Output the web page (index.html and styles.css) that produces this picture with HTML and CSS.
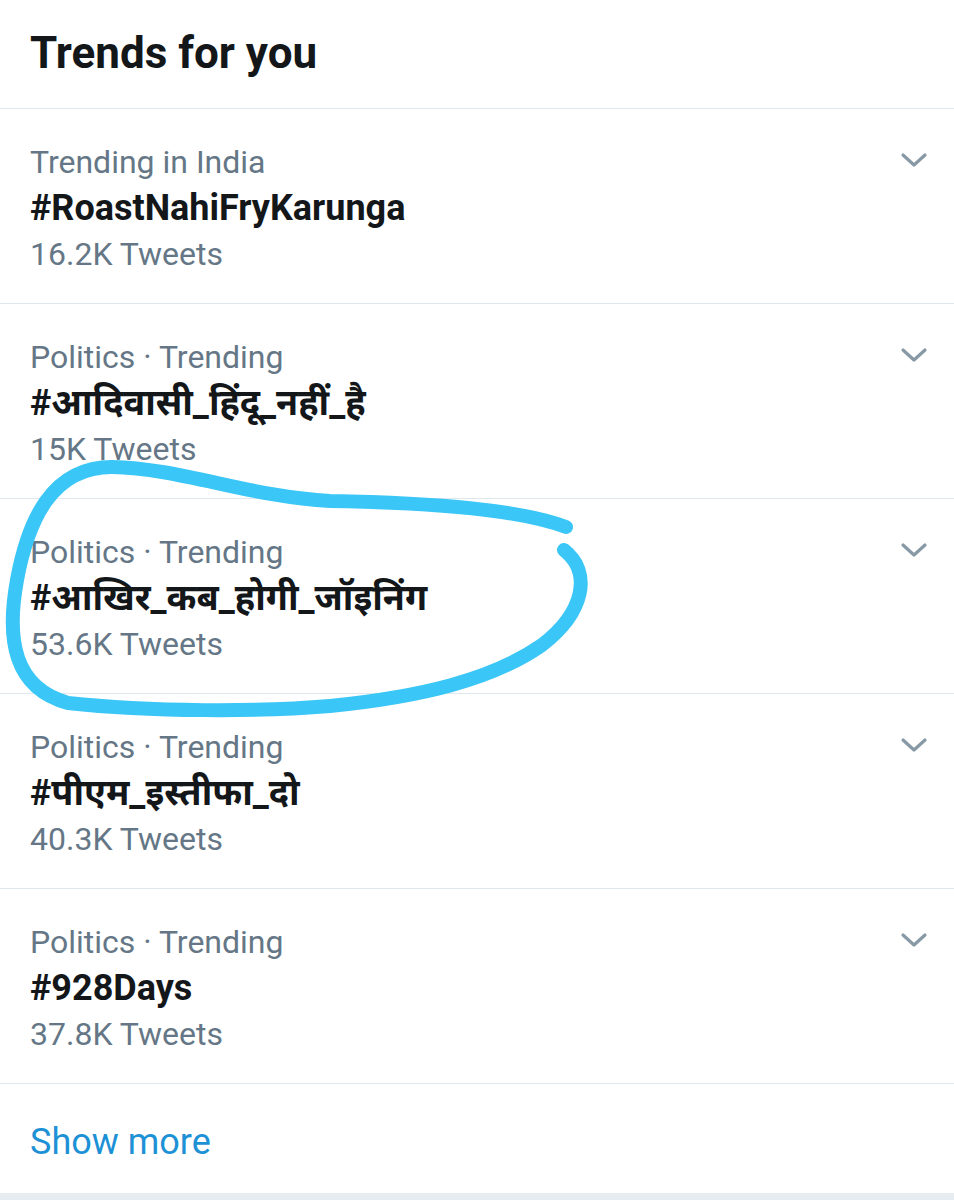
FILE: index.html
```html
<!DOCTYPE html>
<html lang="en">
<head>
<meta charset="utf-8">
<title>Trends for you</title>
<link rel="stylesheet" href="styles.css">
</head>
<body>
<div class="page">
  <div class="card">
    <header class="head"><h1 class="title">Trends for you</h1></header>
    <div class="trend">
      <div class="info">
        <div class="meta">Trending in India</div>
        <div class="tag">#RoastNahiFryKarunga</div>
        <div class="count">16.2K Tweets</div>
      </div>
      <svg class="chev" width="28" height="16" viewBox="0 0 28 16"><path d="M3 3 L14 13 L25 3" fill="none" stroke="#8899a6" stroke-width="3.2" stroke-linecap="round" stroke-linejoin="round"/></svg>
    </div>
    <div class="trend">
      <div class="info">
        <div class="meta">Politics · Trending</div>
        <div class="tag">#आदिवासी_हिंदू_नहीं_है</div>
        <div class="count">15K Tweets</div>
      </div>
      <svg class="chev" width="28" height="16" viewBox="0 0 28 16"><path d="M3 3 L14 13 L25 3" fill="none" stroke="#8899a6" stroke-width="3.2" stroke-linecap="round" stroke-linejoin="round"/></svg>
    </div>
    <div class="trend">
      <div class="info">
        <div class="meta">Politics · Trending</div>
        <div class="tag">#आखिर_कब_होगी_जॉइनिंग</div>
        <div class="count">53.6K Tweets</div>
      </div>
      <svg class="chev" width="28" height="16" viewBox="0 0 28 16"><path d="M3 3 L14 13 L25 3" fill="none" stroke="#8899a6" stroke-width="3.2" stroke-linecap="round" stroke-linejoin="round"/></svg>
    </div>
    <div class="trend">
      <div class="info">
        <div class="meta">Politics · Trending</div>
        <div class="tag">#पीएम_इस्तीफा_दो</div>
        <div class="count">40.3K Tweets</div>
      </div>
      <svg class="chev" width="28" height="16" viewBox="0 0 28 16"><path d="M3 3 L14 13 L25 3" fill="none" stroke="#8899a6" stroke-width="3.2" stroke-linecap="round" stroke-linejoin="round"/></svg>
    </div>
    <div class="trend">
      <div class="info">
        <div class="meta">Politics · Trending</div>
        <div class="tag">#928Days</div>
        <div class="count">37.8K Tweets</div>
      </div>
      <svg class="chev" width="28" height="16" viewBox="0 0 28 16"><path d="M3 3 L14 13 L25 3" fill="none" stroke="#8899a6" stroke-width="3.2" stroke-linecap="round" stroke-linejoin="round"/></svg>
    </div>
    <div class="more">Show more</div>
  </div>
  <svg class="scribble" width="954" height="1200" viewBox="0 0 954 1200">
    <path d="M566 527 C520 510 440 503 330 501 C250 497 180 468 112 467 C52 467 28 520 17 580 C6 640 14 688 68 703 C150 712 260 712 330 706 C420 697 492 680 542 645 C585 612 592 572 564 550" fill="none" stroke="#3ac6f6" stroke-width="14" stroke-linecap="round" stroke-linejoin="round"/>
  </svg>
</div>
</body>
</html>
```
FILE: styles.css
```css
html, body {
  margin: 0;
  padding: 0;
  background: #e6ecf0;
}
body {
  font-family: Roboto, "Noto Sans", "DejaVu Sans", sans-serif;
}
.page {
  position: relative;
  width: 954px;
  height: 1200px;
  overflow: hidden;
}
.card {
  background: #ffffff;
  display: flex;
  flex-direction: column;
}
.head {
  height: 108px;
  padding: 0 30px;
  border-bottom: 1px solid #e1e8ed;
  box-sizing: content-box;
}
.title {
  margin: 0;
  padding-top: 25px;
  font-size: 44px;
  line-height: 56px;
  font-weight: 700;
  color: #14171a;
}
.trend {
  display: flex;
  justify-content: space-between;
  align-items: flex-start;
  padding: 30px 26px 26px 30px;
  border-bottom: 1px solid #e1e8ed;
}
.info {
  display: flex;
  flex-direction: column;
}
.meta, .count {
  font-size: 32px;
  line-height: 46px;
  color: #657786;
}
.tag {
  font-size: 36px;
  line-height: 46px;
  font-weight: 700;
  color: #14171a;
}
.chev {
  margin-top: 13px;
}
.more {
  height: 109px;
  padding: 0 30px;
  box-sizing: border-box;
  padding-top: 35px;
  font-size: 36px;
  line-height: 46px;
  color: #1d91d6;
}
.scribble {
  position: absolute;
  left: 0;
  top: 0;
  pointer-events: none;
}
```
